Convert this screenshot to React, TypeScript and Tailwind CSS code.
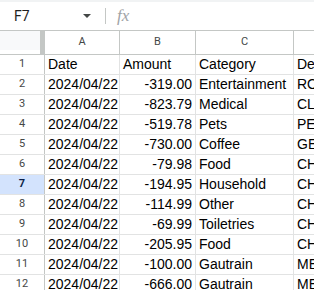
const rows = [
  ["Date", "Amount", "Category", "Description"],
  ["2024/04/22", "-319.00", "Entertainment", "ROCOMAMAS"],
  ["2024/04/22", "-823.79", "Medical", "CLICKS"],
  ["2024/04/22", "-519.78", "Pets", "PETSHOP"],
  ["2024/04/22", "-730.00", "Coffee", "GEORGE"],
  ["2024/04/22", "-79.98", "Food", "CHECKERS"],
  ["2024/04/22", "-194.95", "Household", "CHECKERS"],
  ["2024/04/22", "-114.99", "Other", "CHECKERS"],
  ["2024/04/22", "-69.99", "Toiletries", "CHECKERS"],
  ["2024/04/22", "-205.95", "Food", "CHECKERS"],
  ["2024/04/22", "-100.00", "Gautrain", "MERCHANT"],
  ["2024/04/22", "-666.00", "Gautrain", "MERCHANT"],
];

const cellFont = { fontFamily: '"Liberation Sans", Arial, sans-serif' };

export default function App() {
  return (
    <div className="w-[314px] h-[290px] overflow-hidden bg-white" style={cellFont}>
      <div className="h-[2px] bg-[#f1f3f4]" />
      <div className="h-[29px] flex items-center border-b border-[#c4c7c5]">
        <div className="w-[105px] flex items-center pl-[14px] pr-[14px] text-[14px] text-[#1f1f1f]" style={{ fontFamily: 'Roboto, Arial, sans-serif' }}>
          <span className="flex-1">F7</span>
          <svg width="8" height="5" viewBox="0 0 8 5" className="ml-auto">
            <path d="M0 0h8L4 4z" fill="#444746" />
          </svg>
        </div>
        <div className="w-px h-[16px] bg-[#c4c7c5]" />
        <span className="ml-[11px] text-[17px] italic text-[#a0a3a6]" style={{ fontFamily: '"Liberation Serif", serif' }}>
          fx
        </span>
      </div>
      <div className="flex h-[24px] border-b border-[#c4c7c5] text-[11px] text-[#444746]" style={{ fontFamily: 'Roboto, Arial, sans-serif' }}>
        <div className="w-[45px] shrink-0 flex">
          <div className="w-[40px] h-[19px] bg-[#f8f9fa]" />
          <div className="w-[4px] bg-[#c4c7c5]" />
          <div className="w-px bg-[#c4c7c5]" />
        </div>
        {[["A", 75], ["B", 76], ["C", 98], ["D", 120]].map(([l, w]) => (
          <div
            key={l}
            className="shrink-0 flex items-center justify-center border-r border-[#c4c7c5]"
            style={{ width: w as number }}
          >
            {l}
          </div>
        ))}
      </div>
      {rows.map((r, i) => {
        const sel = i === 6;
        return (
          <div key={i} className="flex h-[20px] border-b border-[#e2e3e3] text-[14px] text-black">
            <div
              className={
                "w-[45px] shrink-0 flex items-center justify-center border-r border-[#c4c7c5] text-[11px] " +
                (sel ? "bg-[#d3e3fd] text-[#0b1f48] font-bold" : "text-[#444746]")
              }
              style={{ fontFamily: 'Roboto, Arial, sans-serif' }}
            >
              {i + 1}
            </div>
            <div className="w-[75px] shrink-0 flex items-center px-[3px] border-r border-[#e2e3e3] overflow-hidden whitespace-nowrap">
              {r[0]}
            </div>
            <div
              className={
                "w-[76px] shrink-0 flex items-center px-[3px] border-r border-[#e2e3e3] overflow-hidden whitespace-nowrap " +
                (i === 0 ? "justify-start" : "justify-end")
              }
            >
              {r[1]}
            </div>
            <div className="w-[98px] shrink-0 flex items-center px-[3px] border-r border-[#e2e3e3] overflow-hidden whitespace-nowrap">
              {r[2]}
            </div>
            <div className="w-[120px] shrink-0 flex items-center px-[3px] overflow-hidden whitespace-nowrap">
              {r[3]}
            </div>
          </div>
        );
      })}
    </div>
  );
}
